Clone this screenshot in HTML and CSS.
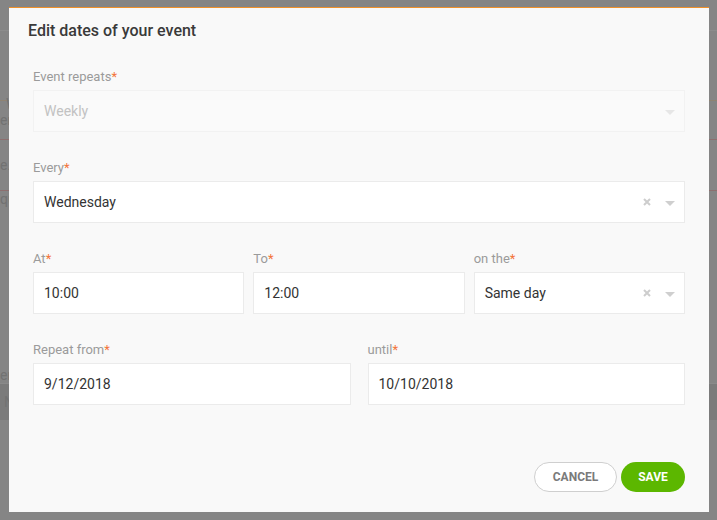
FILE: index.html
```html
<!DOCTYPE html>
<html lang="en">
<head>
<meta charset="utf-8">
<title>Edit dates of your event</title>
<link rel="stylesheet" href="styles.css">
</head>
<body>
<div class="page">
  <div class="bg-row r1"></div>
  <div class="bg-row r2"><span class="bg-text t-w">W</span></div>
  <div class="bg-row r3"><span class="bg-text">er</span></div>
  <div class="bg-row r4"><span class="bg-text">e.</span></div>
  <div class="bg-row r5"><span class="bg-text">qu</span></div>
  <div class="bg-row r6"><span class="bg-text">er</span></div>
  <div class="bg-row r7"><span class="bg-text t-n">N</span></div>
</div>

<div class="modal">
  <h1 class="modal-title">Edit dates of your event</h1>
  <div class="modal-body">
    <div class="field">
      <label class="label">Event repeats<span class="req">*</span></label>
      <div class="control disabled">
        <span class="value">Weekly</span>
        <span class="caret"></span>
      </div>
    </div>

    <div class="field">
      <label class="label">Every<span class="req">*</span></label>
      <div class="control">
        <span class="value">Wednesday</span>
        <svg class="clear" width="8" height="8" viewBox="0 0 8 8"><path d="M1 1L7 7M7 1L1 7"/></svg>
        <span class="caret"></span>
      </div>
    </div>

    <div class="row three">
      <div class="field">
        <label class="label">At<span class="req">*</span></label>
        <div class="control"><span class="value">10:00</span></div>
      </div>
      <div class="field">
        <label class="label">To<span class="req">*</span></label>
        <div class="control"><span class="value">12:00</span></div>
      </div>
      <div class="field">
        <label class="label">on the<span class="req">*</span></label>
        <div class="control">
          <span class="value">Same day</span>
          <svg class="clear" width="8" height="8" viewBox="0 0 8 8"><path d="M1 1L7 7M7 1L1 7"/></svg>
          <span class="caret"></span>
        </div>
      </div>
    </div>

    <div class="row two">
      <div class="field">
        <label class="label">Repeat from<span class="req">*</span></label>
        <div class="control"><span class="value">9/12/2018</span></div>
      </div>
      <div class="field">
        <label class="label">until<span class="req">*</span></label>
        <div class="control"><span class="value">10/10/2018</span></div>
      </div>
    </div>
  </div>
  <div class="modal-footer">
    <button class="btn btn-cancel">CANCEL</button>
    <button class="btn btn-save">SAVE</button>
  </div>
</div>
</body>
</html>
```

FILE: styles.css
```css
html, body {
  margin: 0;
  padding: 0;
}
body {
  width: 717px;
  height: 520px;
  overflow: hidden;
  background: #858585;
  font-family: Roboto, "Liberation Sans", Arial, sans-serif;
  position: relative;
}

/* dimmed page underneath */
.page {
  display: flex;
  flex-direction: column;
}
.bg-row {
  box-sizing: border-box;
  display: flex;
  align-items: center;
  color: #727272;
  font-size: 14px;
}
.r1 { height: 31px; border-bottom: 1px solid #8c8c8c; }
.r2 { height: 70px; border-bottom: 1px solid #8f8372; }
.r2 .t-w { padding-left: 6px; margin-top: 76px; }
.r3 { height: 39px; border-bottom: 1px solid #8d6f6f; }
.r4 { height: 51px; border-bottom: 1px solid #8d6f6f; }
.r5 { height: 27px; align-items: flex-start; }
.r6 { height: 166px; align-items: flex-end; border-bottom: 1px solid #8a8a8a; }
.r7 { height: 36px; background: #7b7b7b; padding-left: 4px; }

/* modal */
.modal {
  position: absolute;
  left: 9px;
  top: 7px;
  width: 700px;
  height: 505px;
  box-sizing: border-box;
  background: #f9f9f9;
  border-top: 1px solid #f0912a;
  display: flex;
  flex-direction: column;
}
.modal-title {
  margin: 0;
  padding: 12px 19px 0;
  height: 48px;
  box-sizing: border-box;
  font-size: 16px;
  line-height: 22px;
  font-weight: 500;
  color: #3a3a3a;
}
.modal-body {
  padding: 12px 24px 0;
  display: flex;
  flex-direction: column;
  gap: 27px;
}
.field {
  display: flex;
  flex-direction: column;
  min-width: 0;
}
.label {
  font-size: 13px;
  line-height: 16px;
  padding-top: 1px;
  color: #9b9b9b;
  margin-bottom: 5px;
}
.req {
  color: #f3743a;
}
.control {
  height: 42px;
  box-sizing: border-box;
  background: #fff;
  border: 1px solid #ebebeb;
  display: flex;
  align-items: center;
  padding: 0 9px 0 10px;
}
.control.disabled {
  background: #fafafa;
  border-color: #f2f2f2;
}
.value {
  flex: 1;
  font-size: 14px;
  color: #333;
}
.disabled .value {
  color: #c2c2c2;
}
.clear {
  flex: none;
  margin-right: 14px;
  stroke: #cdcdcd;
  stroke-width: 2;
  fill: none;
}
.caret {
  width: 0;
  height: 0;
  border-left: 5px solid transparent;
  border-right: 5px solid transparent;
  border-top: 5px solid #cfcfcf;
  margin-top: 3px;
}
.disabled .caret {
  border-top-color: #e6e6e6;
}
.row {
  display: grid;
}
.row.three {
  grid-template-columns: 1fr 1fr 1fr;
  column-gap: 9px;
}
.row.two {
  grid-template-columns: 1fr 1fr;
  column-gap: 17px;
}

.modal-footer {
  margin-top: auto;
  padding: 0 24px 20px;
  display: flex;
  justify-content: flex-end;
  gap: 4px;
}
.btn {
  height: 30px;
  border-radius: 15px;
  font-family: Roboto, "Liberation Sans", Arial, sans-serif;
  font-size: 12px;
  font-weight: 700;
  box-sizing: border-box;
  cursor: pointer;
  padding: 0;
}
.btn-cancel {
  width: 83px;
  background: #fff;
  border: 1px solid #cfcfcf;
  color: #7a7a7a;
}
.btn-save {
  width: 64px;
  background: #5cb700;
  border: none;
  color: #fff;
}
```
